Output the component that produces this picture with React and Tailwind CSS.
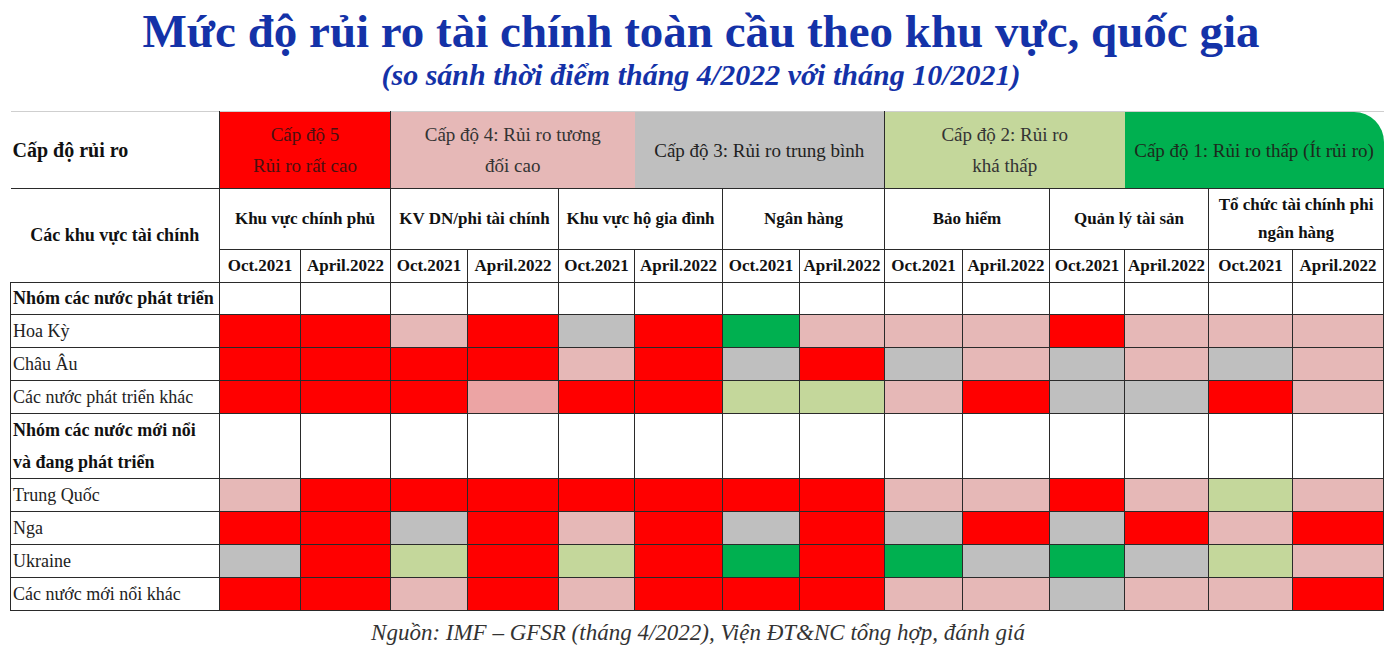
import React from "react";

const serif = { fontFamily: '"Liberation Serif", "Times New Roman", serif' };

const colors = {
  R: "bg-[#ff0000]",
  P: "bg-[#e6b8b7]",
  Q: "bg-[#eca4a4]",
  G: "bg-[#bfbfbf]",
  L: "bg-[#c4d79b]",
  D: "bg-[#00b050]",
};

const widths = [209, 81, 90, 77, 91, 76, 88, 77, 85, 78, 87, 75, 84, 84, 91];

const groups = [
  ["Khu vực chính phủ"],
  ["KV DN/phi tài chính"],
  ["Khu vực hộ gia đình"],
  ["Ngân hàng"],
  ["Bảo hiểm"],
  ["Quản lý tài sản"],
  ["Tổ chức tài chính phi", "ngân hàng"],
];

const developed = [
  ["Hoa Kỳ", "RRPRGRDPPPRPPP"],
  ["Châu Âu", "RRRRPRGRGPGPGP"],
  ["Các nước phát triển khác", "RRRQRRLLPRGGRP"],
];

const emerging = [
  ["Trung Quốc", "PRRRRRRRPPRPLP"],
  ["Nga", "RRGRPRGRGRGRPR"],
  ["Ukraine", "GRLRLRDRDGDGLP"],
  ["Các nước mới nổi khác", "RRPRPRRRPPGPPR"],
];

const cell = "border border-[#2a2a2a]";

function DataRow({ label, codes }) {
  return (
    <tr className="h-[33px]">
      <td className={`${cell} pl-[2px] text-[18px] text-[#222] whitespace-nowrap`}>{label}</td>
      {codes.split("").map((c, i) => (
        <td key={i} className={`${cell} ${colors[c]}`} />
      ))}
    </tr>
  );
}

function EmptyCells() {
  return Array.from({ length: 14 }).map((_, i) => <td key={i} className={`${cell} bg-white`} />);
}

export default function App() {
  return (
    <div className="w-[1392px] h-[652px] bg-white overflow-hidden" style={serif}>
      <div className="flex flex-col items-center pl-[10px]">
        <h1 className="text-[47px] leading-[50px] font-bold text-[#1432a8] mt-[6px] whitespace-nowrap">
          Mức độ rủi ro tài chính toàn cầu theo khu vực, quốc gia
        </h1>
        <p className="text-[30px] leading-[32px] font-bold italic text-[#1432a8] mt-[3px] whitespace-nowrap">
          (so sánh thời điểm tháng 4/2022 với tháng 10/2021)
        </p>
      </div>

      <table className="ml-[10px] mt-[20px] border-collapse table-fixed w-[1373px]" style={serif}>
        <colgroup>
          {widths.map((w, i) => (
            <col key={i} style={{ width: w }} />
          ))}
        </colgroup>
        <tbody>
          <tr className="h-[77px] border-t border-[#cfcfcf]">
            <td className="pl-[2px] text-[20px] font-bold text-[#111] border-b border-[#2a2a2a]">Cấp độ rủi ro</td>
            <td colSpan={2} className="bg-[#ff0000] text-center text-[19px] leading-[31px] text-[#4a1010] border-x border-b border-[#2a2a2a]">
              Cấp độ 5
              <br />
              Rủi ro rất cao
            </td>
            <td colSpan={3} className="bg-[#e6b8b7] text-center text-[19px] leading-[31px] text-[#333] border-b border-[#2a2a2a]">
              Cấp độ 4: Rủi ro tương
              <br />
              đối cao
            </td>
            <td colSpan={3} className="bg-[#bfbfbf] text-center text-[19px] leading-[31px] text-[#222] border-r border-b border-[#2a2a2a]">
              Cấp độ 3: Rủi ro trung bình
            </td>
            <td colSpan={3} className="bg-[#c4d79b] text-center text-[19px] leading-[31px] text-[#333] border-b border-[#2a2a2a]">
              Cấp độ 2: Rủi ro
              <br />
              khá thấp
            </td>
            <td colSpan={3} className="bg-[#00b050] text-center text-[19px] leading-[31px] text-[#1d2a1d] rounded-tr-[30px] border-b border-[#2a2a2a] whitespace-nowrap">
              Cấp độ 1: Rủi ro thấp (Ít rủi ro)
            </td>
          </tr>
          <tr className="h-[61px]">
            <td rowSpan={2} className="border-b border-[#2a2a2a] text-center text-[18px] font-bold text-[#111]">
              Các khu vực tài chính
            </td>
            {groups.map((g, i) => (
              <td key={i} colSpan={2} className={`${cell} text-center text-[17px] leading-[28px] font-bold text-[#111] whitespace-nowrap`}>
                {g.map((line, j) => (
                  <div key={j}>{line}</div>
                ))}
              </td>
            ))}
          </tr>
          <tr className="h-[33px]">
            {groups.flatMap((_, i) => [
              <td key={`o${i}`} className={`${cell} text-center text-[17px] font-bold text-[#111] whitespace-nowrap`}>Oct.2021</td>,
              <td key={`a${i}`} className={`${cell} text-center text-[17px] font-bold text-[#111] whitespace-nowrap`}>April.2022</td>,
            ])}
          </tr>
          <tr className="h-[32px]">
            <td className={`${cell} pl-[2px] text-[18px] font-bold text-[#111] whitespace-nowrap`}>Nhóm các nước phát triển</td>
            <EmptyCells />
          </tr>
          {developed.map(([label, codes]) => (
            <DataRow key={label} label={label} codes={codes} />
          ))}
          <tr className="h-[63px]">
            <td className={`${cell} pl-[2px] text-[18px] leading-[32px] font-bold text-[#111]`}>
              Nhóm các nước mới nổi
              <br />
              và đang phát triển
            </td>
            <EmptyCells />
          </tr>
          {emerging.map(([label, codes]) => (
            <DataRow key={label} label={label} codes={codes} />
          ))}
        </tbody>
      </table>

      <p className="text-center text-[23px] leading-[30px] italic text-[#333] mt-[7px] pl-[4px]">
        Nguồn: IMF – GFSR (tháng 4/2022), Viện ĐT&amp;NC tổng hợp, đánh giá
      </p>
      <div className="ml-[22px] w-[1333px] border-t border-[#d0d0d0] mt-[5px]" />
    </div>
  );
}
